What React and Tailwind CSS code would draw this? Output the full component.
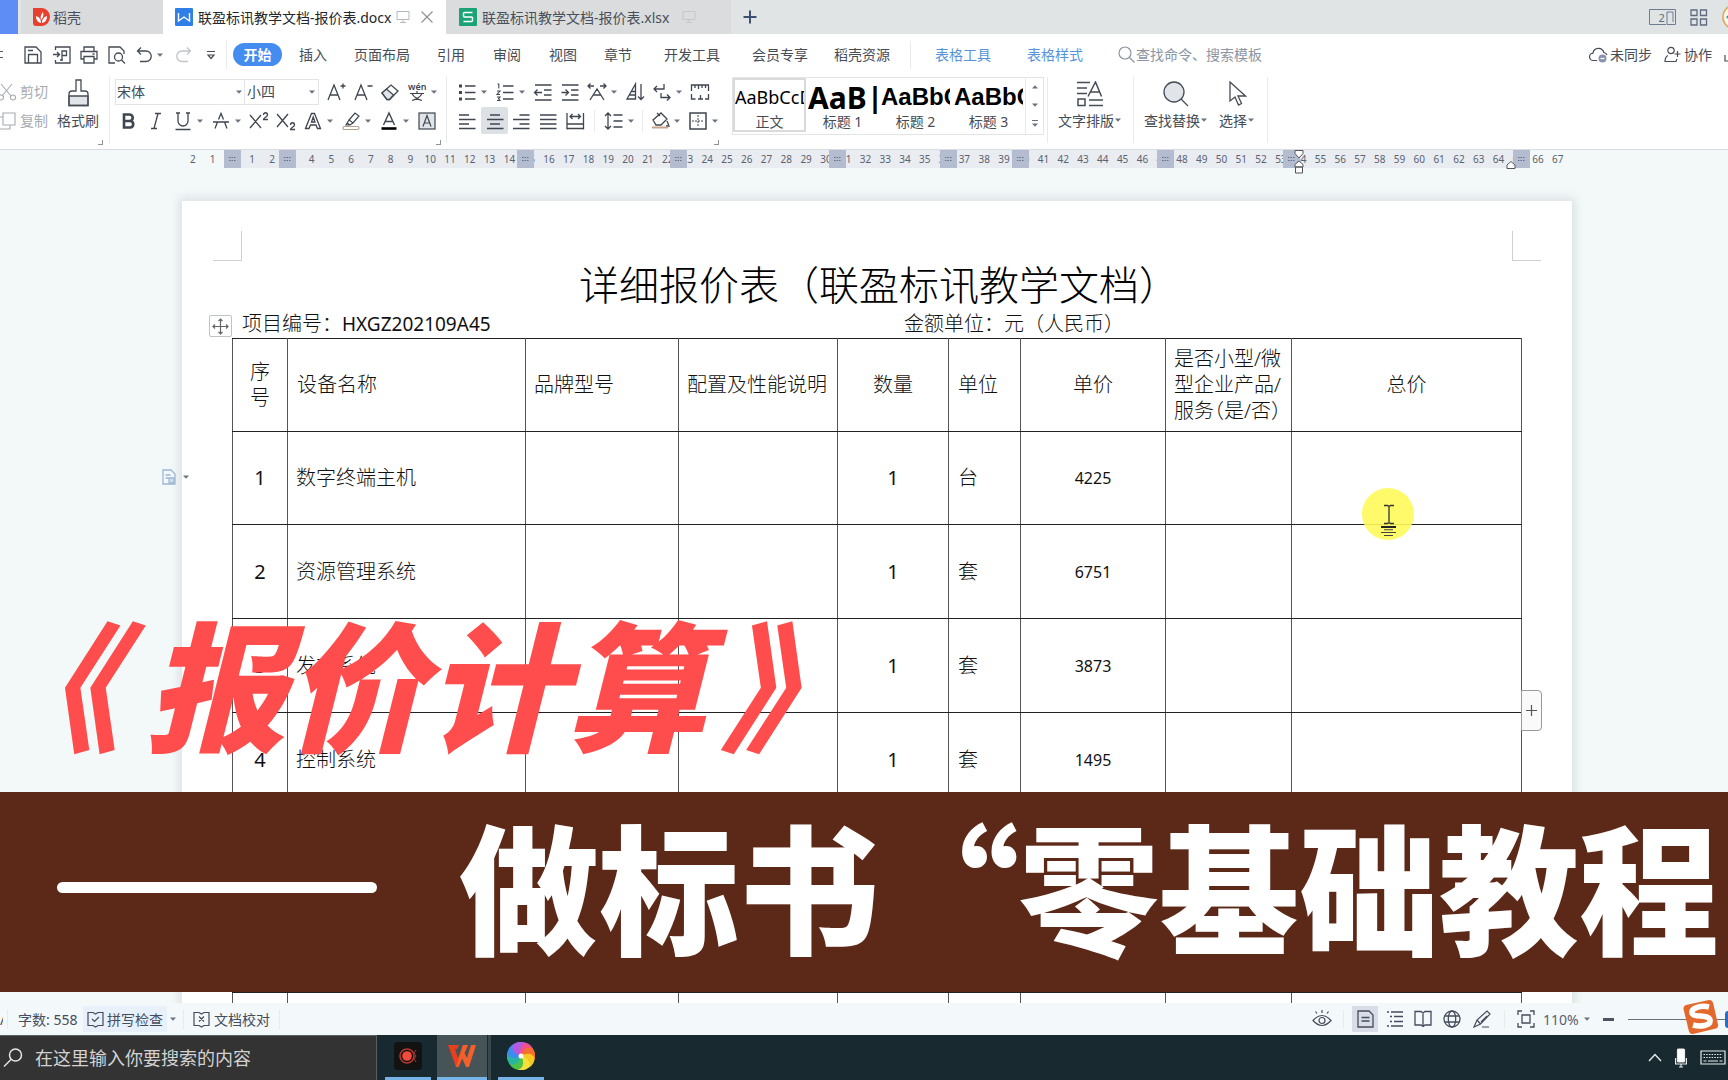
import React from "react";

const UI = "font-['Noto_Sans','Noto_Sans_CJK_SC',sans-serif]";

function Svg({ w = 20, h = 20, children, className = "", sw = 1.4 }) {
  return (
    <svg
      width={w}
      height={h}
      viewBox={`0 0 ${w} ${h}`}
      fill="none"
      stroke="currentColor"
      strokeWidth={sw}
      className={`shrink-0 ${className}`}
      aria-hidden="true"
    >
      {children}
    </svg>
  );
}

function Caret({ className = "" }) {
  return (
    <svg width="8" height="8" viewBox="0 0 8 8" className={`shrink-0 ${className}`} aria-hidden="true">
      <path d="M1 2.5h6L4 5.8z" fill="#6b7280" />
    </svg>
  );
}

function Tool({ label, caret, active, children }) {
  return (
    <button
      type="button"
      aria-label={label}
      className={`flex h-[27px] shrink-0 items-center justify-between text-[#3f4650] ${caret ? "w-[31px]" : "w-5"}`}
    >
      {active ? (
        <span className="-mx-[3px] flex h-[27px] w-[27px] shrink-0 items-center justify-center rounded-[2px] bg-[#dce1e5]">
          {children}
        </span>
      ) : (
        children
      )}
      {caret && <Caret />}
    </button>
  );
}

const VLine = ({ className = "" }) => <span className={`w-px shrink-0 bg-[#e8eaec] ${className}`} />;

/* ---------- title tabs ---------- */

function Monitor({ className }) {
  return (
    <Svg w={14} h={14} sw={1} className={className}>
      <path d="M1 1.500h12v8H1zM7 9.500v3M4 12.500h6" />
    </Svg>
  );
}

function TabBar() {
  return (
    <header className="flex h-[34px] shrink-0 items-stretch bg-[#e1e4e5] text-[14px] text-[#48505c]">
      <div className="w-[18px] shrink-0 bg-[#5e8df6]" />
      <button type="button" className="ml-[3px] flex w-[142px] shrink-0 items-center bg-[#dadbdc] pl-3">
        <svg width="17" height="18" viewBox="0 0 17 18" className="mr-[3px]" aria-hidden="true">
          <path d="M0 0h9a8 9 0 0 1 0 18H3a3 3 0 0 1-3-3z" fill="#e8402f" />
          <path d="M8 15C4 14 3 11 3 8c3 1 5 3 5 7zM8 12c-1-3 0-6 2-8 1 3 0 6-2 8zM9 15c0-4 2-6 5-7 0 3-1 6-5 7z" fill="#fff" />
        </svg>
        稻壳
      </button>
      <div className="flex w-[283px] shrink-0 items-center bg-white pl-3 text-[#22272e]">
        <svg width="18" height="18" viewBox="0 0 18 18" className="mr-[5px] shrink-0" aria-hidden="true">
          <rect width="18" height="18" rx="1" fill="#2f7fe6" />
          <path d="M3.500 5v8l5.500-4 5.500 4V5" fill="none" stroke="#fff" strokeWidth="1.4" />
        </svg>
        <span className="whitespace-nowrap">联盈标讯教学文档-报价表.docx</span>
        <Monitor className="ml-auto text-[#b4b9bf]" />
        <button type="button" aria-label="关闭" className="mr-[12px] ml-[10px] text-[#8b9096]">
          <Svg w={14} h={14} sw={1.2}>
            <path d="M1.500 1.500l11 11M12.500 1.500l-11 11" />
          </Svg>
        </button>
      </div>
      <button type="button" className="flex w-[285px] shrink-0 items-center bg-[#dadcdd] pl-[13px]">
        <svg width="18" height="18" viewBox="0 0 18 18" className="mr-[5px] shrink-0" aria-hidden="true">
          <rect width="18" height="18" rx="1" fill="#1aa377" />
          <path d="M13.500 4.500H5.500a1 1 0 0 0-1 1V8a1 1 0 0 0 1 1h7a1 1 0 0 1 1 1v2.500a1 1 0 0 1-1 1H4.500" fill="none" stroke="#fff" strokeWidth="1.5" />
        </svg>
        <span className="whitespace-nowrap">联盈标讯教学文档-报价表.xlsx</span>
        <Monitor className="mr-[35px] ml-auto text-[#c3c8cc]" />
      </button>
      <button type="button" aria-label="新建标签" className="ml-3 text-[#3c5070]">
        <Svg w={14} h={14} sw={2}>
          <path d="M7 .5v13M.5 7h13" />
        </Svg>
      </button>
      <div className="ml-auto flex items-center text-[#5d6a80]">
        <svg width="27" height="17" viewBox="0 0 27 17" aria-hidden="true" className="mr-[14px]">
          <path d="M17 15.500H.5V.5h26v15H18V3h6v10" fill="none" stroke="#6f7b90" />
          <text x="9.500" y="12.500" fontSize="11" fill="#5d6a80">2</text>
        </svg>
        <Svg w={18} h={17} sw={1.3} className="mr-[14px]">
          <path d="M1 1h6v5.500H1zM10.500 1h6v5.500h-6zM1 10h6v6H1zM10.500 10h6v6h-6z" />
        </Svg>
        <svg width="6" height="26" viewBox="0 0 6 26" aria-hidden="true">
          <circle cx="13" cy="13" r="12" fill="#fdf6e6" stroke="#dfa35e" strokeWidth="1.6" />
          <circle cx="6" cy="13" r="1.600" fill="#3a9d8a" />
        </svg>
      </div>
    </header>
  );
}

/* ---------- menu row ---------- */

const menu = [
  ["插入", "ml-[17px]"],
  ["页面布局", "ml-[27px]"],
  ["引用", "ml-[27px]"],
  ["审阅", "ml-[28px]"],
  ["视图", "ml-[28px]"],
  ["章节", "ml-[27px]"],
  ["开发工具", "ml-[32px]"],
  ["会员专享", "ml-[32px]"],
  ["稻壳资源", "ml-[26px]"],
];

function MenuRow() {
  return (
    <nav className="flex h-[41px] shrink-0 items-center bg-white text-[14px] whitespace-nowrap text-[#454c56]">
      <div className="flex w-[226px] shrink-0 items-center text-[#444b55]">
        <span className="h-[7px] w-[3px] border-y border-[#555c66]" />
        <button type="button" aria-label="保存" className="ml-[21px]">
          <Svg w={18} h={18} sw={1.3}>
            <path d="M1 1h11l5 5v11H1zM4.500 17V8.500h9V17M4 4.500h5" />
          </Svg>
        </button>
        <button type="button" aria-label="输出为PDF" className="ml-[11px]">
          <Svg w={18} h={18} sw={1.3}>
            <path d="M2.500 4V1h14.500v16H2.500v-3M0 8.500h6M4 6l2.500 2.500L4 11M9 14V5h4.500v4.500H9M7 14h3" />
          </Svg>
        </button>
        <button type="button" aria-label="打印" className="ml-[9px]">
          <Svg w={18} h={18} sw={1.3}>
            <path d="M4 5V1h10v4M4 13H1V5.500h16V13h-3M4 10.500h10V17H4zM12.500 8h2" />
          </Svg>
        </button>
        <button type="button" aria-label="打印预览" className="ml-[10px]">
          <Svg w={18} h={18} sw={1.3}>
            <path d="M7 17H1V1h11l4 4v3M13.500 14l3.500 3.500" />
            <circle cx="10.500" cy="11" r="4" />
          </Svg>
        </button>
        <button type="button" aria-label="撤销" className="ml-[10px] flex items-center">
          <Svg w={17} h={18} sw={1.3}>
            <path d="M5 1.500L1.500 5 5 8.500M1.500 5H10a5 5 0 0 1 0 10.500H4" />
          </Svg>
          <Caret className="ml-[3px]" />
        </button>
        <button type="button" aria-label="恢复" className="ml-[11px] text-[#c0c4c9]">
          <Svg w={17} h={18} sw={1.3}>
            <path d="M12 1.500L15.500 5 12 8.500M15.500 5H7a5 5 0 0 0 0 10.500h6" />
          </Svg>
        </button>
        <button type="button" aria-label="自定义快速访问" className="ml-[14px]">
          <Svg w={10} h={10} sw={1.2}>
            <path d="M1 1.500h8M2 5h6L5 8.500z" />
          </Svg>
        </button>
      </div>
      <VLine className="h-7" />
      <button
        type="button"
        className="ml-[6px] h-[23px] w-[49px] shrink-0 rounded-full bg-[#458cf0] text-[14px] leading-[23px] font-bold text-white"
      >
        开始
      </button>
      {menu.map(([label, ml]) => (
        <button type="button" key={label} className={`shrink-0 ${ml}`}>
          {label}
        </button>
      ))}
      <VLine className="ml-[20px] h-7" />
      <button type="button" className="ml-[24px] text-[#5594dc]">表格工具</button>
      <button type="button" className="ml-[36px] text-[#5594dc]">表格样式</button>
      <label className="ml-[35px] flex w-[150px] items-center text-[#8b95a3]">
        <Svg w={17} h={17} sw={1.2}>
          <circle cx="7" cy="7" r="6" />
          <path d="M11.500 11.500l5 5" />
        </Svg>
        <input
          aria-label="搜索"
          placeholder="查找命令、搜索模板"
          className="ml-[1px] w-full bg-transparent outline-none placeholder:text-[#8b95a3]"
        />
      </label>
      <div className="ml-auto flex items-center">
        <button type="button" className="flex items-center">
          <Svg w={19} h={17} sw={1.2} className="mr-[2px]">
            <path d="M8 14.500H4.500a3.700 3.700 0 0 1-.5-7.400A5.500 5.500 0 0 1 14.800 6.500 4 4 0 0 1 18 9" />
            <circle cx="13.500" cy="12.500" r="4" fill="#8893ad" stroke="none" />
            <path d="M11.500 12.500h4" stroke="#fff" />
          </Svg>
          未同步
        </button>
        <button type="button" className="ml-[12px] flex items-center">
          <Svg w={17} h={17} sw={1.2} className="mr-[3px]">
            <circle cx="7" cy="4.500" r="3.200" />
            <path d="M4 9.500c-2 1-3 3-3 6h11l1-2.500M13.500 5v6M10.500 8h6" />
          </Svg>
          协作
        </button>
        <Svg w={4} h={14} sw={1.2} className="ml-[12px]">
          <path d="M1 7v6h4" />
        </Svg>
      </div>
    </nav>
  );
}

/* ---------- ribbon ---------- */

const Corner = ({ className = "" }) => (
  <span className={`absolute bottom-[4px] h-[5px] w-[5px] border-r border-b border-[#8d939b] ${className}`} />
);

function StyleCell({ sample, name, selected, sampleClass }) {
  return (
    <button
      type="button"
      className={`flex h-[54px] w-[73px] shrink-0 flex-col items-center overflow-hidden border-2 ${selected ? "border-[#d9dadc]" : "border-transparent"}`}
    >
      <span className={`flex h-[34px] w-full items-center overflow-hidden whitespace-nowrap text-black ${sampleClass}`}>{sample}</span>
      <span className="text-[14px] leading-[15px] whitespace-nowrap text-[#454c56]">{name}</span>
    </button>
  );
}

function Ribbon() {
  return (
    <section className="flex h-[75px] shrink-0 items-start border-b border-[#d9dde3] bg-white pt-[2px] text-[14px] whitespace-nowrap text-[#454c56]">
      <div className="relative flex h-full w-[109px] shrink-0">
        <div className="flex w-[48px] flex-col text-[#a6abb1]">
          <button type="button" className="flex h-[29px] items-center">
            <Svg w={17} h={18} sw={1.1} className="mr-[3px]">
              <path d="M1 1l10 12M12 1L2 13" />
              <circle cx="1" cy="14.500" r="2.500" />
              <circle cx="13" cy="14.500" r="2.500" />
            </Svg>
            剪切
          </button>
          <button type="button" className="flex h-[29px] items-center">
            <Svg w={17} h={18} sw={1.1} className="mr-[3px]">
              <path d="M3 1h12v12H3zM0 5h3M0 17h10v-4" />
            </Svg>
            复制
          </button>
        </div>
        <button type="button" className="ml-[9px] flex flex-col items-center self-start pt-[2px]">
          <Svg w={21} h={28} sw={1.3}>
            <path d="M1 17h19v9.500H1z" fill="#e1e4e8" />
            <path d="M1 26.500V15q0-3 3-3h4V1h5v11h4q3 0 3 3v11.500z" />
          </Svg>
          <span className="mt-[4px] leading-[20px]">格式刷</span>
        </button>
        <Corner className="right-[6px]" />
      </div>
      <VLine className="h-[66px]" />
      <div className="relative h-full w-[336px] shrink-0 pl-[5px]">
        <div className="flex h-[29px] items-center gap-[7px]">
          <div className="flex h-[26px] w-[204px] shrink-0 border border-[#e2e4e6]">
            <button type="button" aria-label="字体" className="flex w-[129px] items-center justify-between border-r border-[#e2e4e6] px-[1px]">
              宋体
              <Caret />
            </button>
            <button type="button" aria-label="字号" className="flex flex-1 items-center justify-between px-[2px]">
              小四
              <Caret />
            </button>
          </div>
          <Tool label="增大字号">
            <Svg sw={1.3}>
              <path d="M2 18L8 3l6 15M4 13h8M14.500 4h5M17 1.500v5" />
            </Svg>
          </Tool>
          <Tool label="减小字号">
            <Svg sw={1.3}>
              <path d="M2 18L8 3l6 15M4 13h8M14.500 4h5" />
            </Svg>
          </Tool>
          <Tool label="清除格式">
            <Svg sw={1.3}>
              <path d="M2 11l9-8 7 6-8.500 8.500H7z" />
              <path d="M2 11l4.500-4 7 6L9.500 17.500H7z" fill="#e1e4e8" />
            </Svg>
          </Tool>
          <Tool label="拼音指南" caret>
            <Svg sw={1.2}>
              <text x="1" y="8" fontSize="9" fill="currentColor" stroke="none" fontWeight="600">wén</text>
              <path d="M3 11.500h14M10 9v2.500M5 11.500c2 4 6 6 10 7M15 11.500c-2 4-6 6-10 7" />
            </Svg>
          </Tool>
        </div>
        <div className="flex h-[29px] items-center gap-[7px] pl-[4px]">
          <Tool label="加粗">
            <Svg sw={2.6}>
              <path d="M5 3.500h5.500a3.200 3.200 0 0 1 0 6.500H5zM5 10h6.500a3.300 3.300 0 0 1 0 6.500H5z" />
            </Svg>
          </Tool>
          <Tool label="倾斜">
            <Svg sw={1.3}>
              <path d="M9 2.500h6M5 17.500h6M12 2.500L8 17.500" />
            </Svg>
          </Tool>
          <Tool label="下划线" caret>
            <Svg sw={1.3}>
              <path d="M5 2v8a5 5 0 0 0 10 0V2M3 2h4M13 2h4M2.500 18.500h15" />
            </Svg>
          </Tool>
          <Tool label="删除线" caret>
            <Svg sw={1.3}>
              <path d="M4 17.500L6.500 11M13.500 11L16 17.500M7.500 8.500L10 2.500l2.500 6M2 11h16" />
            </Svg>
          </Tool>
          <Tool label="上标">
            <Svg sw={1.3}>
              <path d="M1 4l11 13M12 4L1 17M14.500 4c0-3 4-3 4 0 0 2-4 2.500-4 4.500h4.500" />
            </Svg>
          </Tool>
          <Tool label="下标">
            <Svg sw={1.3}>
              <path d="M1 3l11 13M12 3L1 16M14.500 14c0-3 4-3 4 0 0 2-4 2.500-4 4.500h4.500" />
            </Svg>
          </Tool>
          <Tool label="文字效果" caret>
            <Svg sw={1.3}>
              <path d="M2.500 17.500L8.500 2.500h3l6 15h-3L13 14H7.500L6 17.500zM8.500 11h3.500L10.200 6z" />
            </Svg>
          </Tool>
          <Tool label="突出显示" caret>
            <Svg sw={1.2}>
              <path d="M8 9l6-7 4 3-6 7zM8 9l-3 5h4l3-2M6 12l3 2" />
              <rect x="2" y="15.500" width="16" height="3" rx="1.500" stroke="#b4a08c" />
            </Svg>
          </Tool>
          <Tool label="字体颜色" caret>
            <Svg sw={1.4}>
              <path d="M4.500 14L10 2l5.500 12M6.500 10.500h7" />
              <path d="M2.500 17.500h15" stroke="#000" strokeWidth="2.600" />
            </Svg>
          </Tool>
          <Tool label="字符底纹">
            <Svg sw={1.2}>
              <rect x="2" y="2" width="16" height="16" fill="#e1e4e8" />
              <path d="M6 15.500l4-11 4 11M7.500 12h5" />
            </Svg>
          </Tool>
        </div>
        <Corner className="right-[5px]" />
      </div>
      <div className="relative h-full w-[274px] shrink-0 pl-[11px]">
        <VLine className="absolute top-0 left-0 h-[66px]" />
        <div className="flex h-[29px] items-center gap-[7px]">
          <Tool label="项目符号" caret>
            <Svg sw={1.4}>
              <path d="M8 4h10.500M8 10.500h10.500M8 17h10.500" />
              <path d="M2 4h3M2 10.500h3M2 17h3" strokeWidth="3" />
            </Svg>
          </Tool>
          <Tool label="编号" caret>
            <Svg sw={1.4}>
              <path d="M8 4h10.500M8 10.500h10.500M8 17h10.500" />
              <path d="M2.500 2h1.300v4.500M2 9h3l-3 3.500h3M2 15h3l-1.500 1.800L5 18.500H2" strokeWidth="1.1" />
            </Svg>
          </Tool>
          <Tool label="减少缩进">
            <Svg sw={1.3}>
              <path d="M2 3h16.500M11 8h7.500M11 13h7.500M2 18h16.500M9 10.500H1.500M4.500 7.500l-3 3 3 3" />
            </Svg>
          </Tool>
          <Tool label="增加缩进">
            <Svg sw={1.3}>
              <path d="M2 3h16.500M11 8h7.500M11 13h7.500M2 18h16.500M1.500 10.500H8.500M5.500 7.500l3 3-3 3" />
            </Svg>
          </Tool>
          <Tool label="中文版式" caret>
            <Svg sw={1.3}>
              <path d="M1 4h6M3.500 1.500L1 4l2.500 2.500M19 4h-6M16.500 1.500L19 4l-2.500 2.500M3 18l7-11 7 11M6 13h8" />
            </Svg>
          </Tool>
          <Tool label="排序">
            <Svg sw={1.3}>
              <path d="M2 17L10.500 2v15zM6.500 9.500h4M4.500 13h6M16 2v15.500M13 14.500l3 3 3-3" />
            </Svg>
          </Tool>
          <Tool label="换行" caret>
            <Svg sw={1.3}>
              <path d="M12 2v5H2M5 4L2 7l3 3M9 11v4.500h9M15 12.500l3 3-3 3" />
            </Svg>
          </Tool>
          <Tool label="制表位">
            <Svg sw={1.3}>
              <path d="M1.500 9V3h17v6M5 3v3M8.500 3v4M12 3v3M15.500 3v3M1.500 12v5h4M8 17h5M10.500 13v4M15 17h3.500v-5" />
            </Svg>
          </Tool>
        </div>
        <div className="flex h-[29px] items-center gap-[7px]">
          <Tool label="左对齐">
            <Svg><path d="M2 4h10M2 8.500h16.500M2 13h10M2 17.500h16.500" /></Svg>
          </Tool>
          <Tool label="居中对齐" active>
            <Svg><path d="M5 4h10M2 8.500h16.500M5 13h10M2 17.500h16.500" /></Svg>
          </Tool>
          <Tool label="右对齐">
            <Svg><path d="M8.500 4h10M2 8.500h16.500M8.500 13h10M2 17.500h16.500" /></Svg>
          </Tool>
          <Tool label="两端对齐">
            <Svg><path d="M2 4h16.500M2 8.500h16.500M2 13h16.500M2 17.500h16.500" /></Svg>
          </Tool>
          <Tool label="分散对齐">
            <Svg sw={1.3}>
              <path d="M2 2v16.500M18.500 2v16.500M2 13h16.500M2 17.500h16.500M5 5.500h10.500M7.500 3L5 5.500 7.500 8M13 3l2.500 2.500L13 8" />
            </Svg>
          </Tool>
          <VLine className="mx-[2px] h-[22px]" />
          <Tool label="行距" caret>
            <Svg sw={1.3}>
              <path d="M4 2v16M1 5l3-3 3 3M1 15l3 3 3-3M9.500 4h9M9.500 10h9M9.500 16h9" />
            </Svg>
          </Tool>
          <VLine className="h-[22px]" />
          <Tool label="底纹颜色" caret>
            <Svg sw={1.3}>
              <path d="M3 9l8-7 6 6-6 6H6zM7 2l3 3M17 10l2 5h-3" />
              <path d="M2 16.500h16" stroke="#c9a28a" strokeWidth="2" />
            </Svg>
          </Tool>
          <Tool label="边框" caret>
            <Svg sw={1.5}>
              <path d="M2 2h16v16H2z" />
              <path d="M10 4v12M4 10h12" strokeWidth="1" strokeDasharray="2 1" />
            </Svg>
          </Tool>
        </div>
        <Corner className="right-[1px]" />
      </div>
      <div className="ml-[12px] flex h-[58px] w-[312px] shrink-0 items-start border border-[#e2e4e6]">
        <StyleCell selected sample="AaBbCcD" name="正文" sampleClass="text-[18px]" />
        <StyleCell sample="AaB|" name="标题 1" sampleClass="text-[30px] font-bold" />
        <StyleCell
          sample="AaBbC"
          name="标题 2"
          sampleClass="font-['Liberation_Sans',sans-serif] text-[24px] font-bold"
        />
        <StyleCell
          sample="AaBbC"
          name="标题 3"
          sampleClass="font-['Liberation_Sans',sans-serif] text-[24px] font-bold"
        />
        <div className="flex h-full flex-1 flex-col items-center justify-around border-l border-[#e8eaec]">
          <button type="button" aria-label="上一行"><Caret className="rotate-180" /></button>
          <button type="button" aria-label="下一行"><Caret /></button>
          <button type="button" aria-label="更多样式" className="flex flex-col items-center">
            <span className="h-px w-[6px] bg-[#6b7280]" />
            <Caret />
          </button>
        </div>
      </div>
      <VLine className="ml-[3px] h-[66px]" />
      <button type="button" className="ml-[10px] flex flex-col items-center pt-[4px]">
        <Svg w={26} h={26} sw={1.5}>
          <path d="M0 1.500h13M0 7h10M0 12.500h10M11 15.500L18.500 1l6 14.500M13.500 11h9M1 18h7v6.500H1zM12 19h14M12 24.500h14" />
        </Svg>
        <span className="mt-[4px] flex items-start leading-[20px]">文字排版<Caret className="mt-[5px]" /></span>
      </button>
      <VLine className="ml-[11px] h-[66px]" />
      <button type="button" className="ml-[10px] flex flex-col items-center pt-[4px]">
        <Svg w={26} h={26} sw={1.3}>
          <circle cx="11" cy="11" r="10" fill="#e1e4e8" />
          <path d="M18 18l7 7" />
        </Svg>
        <span className="mt-[4px] flex items-start leading-[20px]">查找替换<Caret className="mt-[5px]" /></span>
      </button>
      <button type="button" className="ml-[11px] flex flex-col items-center pt-[4px]">
        <Svg w={20} h={26} sw={1.3}>
          <path d="M3 1v19l5-4 3.500 8 3-1.500-3.500-7.500h7.500z" />
        </Svg>
        <span className="mt-[4px] flex items-start leading-[20px]">选择<Caret className="mt-[5px]" /></span>
      </button>
      <VLine className="ml-[12px] h-[66px]" />
    </section>
  );
}

/* ---------- ruler and page ---------- */

const columns = [55, 238, 153, 159, 111, 72, 145, 126, 230];
const stops = columns.reduce((list, w) => [...list, list[list.length - 1] + w], [51]);
const rulerNumbers = Array.from({ length: 70 }, (_, i) => i - 2);

function Ruler() {
  return (
    <div className="pl-[26px]">
      <div className="relative mx-auto h-[18px] w-full max-w-[1390px]">
        <div className="absolute inset-y-0 right-[46px] left-[44px] bg-[#e9ecf1]" />
        <div className="absolute inset-y-0 right-[4px] left-[1px] flex text-[10px] leading-[18px] text-[#5b6270]">
          {rulerNumbers.map((n) => (
            <span key={n} className="w-0 flex-1 text-center">
              {n === 0 ? "" : Math.abs(n)}
            </span>
          ))}
        </div>
        {stops.map((x) => (
          <span
            key={x}
            style={{ left: x - 9 }}
            className="absolute inset-y-0 flex w-[17px] items-center justify-center bg-[#b4bdd0] text-[#64708a]"
          >
            <Svg w={7} h={6} sw={1}>
              <path d="M0 1.500h7M0 4.500h7" strokeDasharray="1.500 1" />
            </Svg>
          </span>
        ))}
        <svg width="10" height="24" viewBox="0 0 10 24" className="absolute top-0 left-[1112px]" fill="#fff" stroke="#555" aria-hidden="true">
          <path d="M1 .5h8v3L5 8 1 3.500zM5 11l4 3.500V17H1v-2.500zM1.500 17h7v6h-7z" />
        </svg>
        <svg width="10" height="8" viewBox="0 0 10 8" className="absolute top-[11px] left-[1324px]" fill="#fff" stroke="#555" aria-hidden="true">
          <path d="M5 .5l4 3.500v3.500H1V4z" />
        </svg>
      </div>
    </div>
  );
}

const rows = [
  ["1", "数字终端主机", "1", "台", "4225", "h-[93px]"],
  ["2", "资源管理系统", "1", "套", "6751", "h-[94px]"],
  ["3", "发布系统", "1", "套", "3873", "h-[94px]"],
  ["4", "控制系统", "1", "套", "1495", "h-[94px]"],
  ["", "", "", "", "", "h-[93px]"],
  ["", "", "", "", "", "h-[93px]"],
  ["", "", "", "", "", "h-[93px]"],
];

const cell = "border-x border-x-[#555] border-y border-y-[#222] p-0";

function QuoteTable() {
  return (
    <table className="w-[1290px] table-fixed border-collapse text-[20px] leading-[26px] text-[#111]">
      <colgroup>
        {columns.map((w, i) => (
          <col key={i} style={{ width: w }} />
        ))}
      </colgroup>
      <thead>
        <tr className="h-[93px] [&>th]:font-light">
          <th className={`${cell} px-[16px]`}>序号</th>
          <th className={`${cell} pl-[9px] text-left`}>设备名称</th>
          <th className={`${cell} pl-[8px] text-left`}>品牌型号</th>
          <th className={`${cell} pl-[8px] text-left whitespace-nowrap`}>配置及性能说明</th>
          <th className={cell}>数量</th>
          <th className={`${cell} pl-[9px] text-left`}>单位</th>
          <th className={cell}>单价</th>
          <th className={`${cell} pl-[8px] text-left whitespace-nowrap`}>
            是否小型/微<br />型企业产品/<br />服务<span className="[font-feature-settings:'halt']">（</span>是/否）
          </th>
          <th className={cell}>总价</th>
        </tr>
      </thead>
      <tbody>
        {rows.map(([no, name, qty, unit, price, h], i) => (
          <tr key={i} className={h}>
            <td className={`${cell} text-center`}>{no}</td>
            <td className={`${cell} pl-[8px] font-light`}>{name}</td>
            <td className={cell} />
            <td className={cell} />
            <td className={`${cell} text-center`}>{qty}</td>
            <td className={`${cell} pl-[9px] font-light`}>{unit}</td>
            <td className={`${cell} text-center text-[16px]`}>{price}</td>
            <td className={cell} />
            <td className={cell} />
          </tr>
        ))}
      </tbody>
    </table>
  );
}

function Document() {
  return (
    <main className="relative min-h-0 flex-1 overflow-hidden bg-[#f3f9f9]">
      <Ruler />
      <div className="pl-[26px]">
        <article className="relative mx-auto mt-[33px] w-full max-w-[1390px] bg-white px-[50px] pt-[60px] shadow-[0_0_9px_3px_rgba(120,130,140,0.2)]">
          <span className="absolute top-[30px] left-[31px] h-[30px] w-[29px] border-r border-b border-[#cfcfcf]" />
          <span className="absolute top-[30px] right-[31px] h-[30px] w-[29px] border-b border-l border-[#cfcfcf]" />
          <div className="absolute top-[268px] left-[-20px] flex items-center gap-[6px] text-[#9db7d6]">
            <Svg w={14} h={16} sw={1.3}>
              <path d="M1 1h8l4 4v10H1zM3.500 6h5M3.500 9h3" />
              <path d="M7 9h5v5H7z" fill="#cfdff0" />
            </Svg>
            <Caret />
          </div>
          <h1 className="pl-[4px] text-center text-[40px] leading-[48px] font-light whitespace-nowrap text-black">
            详细报价表（联盈标讯教学文档）
          </h1>
          <div className="flex h-[29px] items-center text-[20px] whitespace-nowrap text-[#111]">
            <p className="w-[672px] pl-[10px]">
              <span className="font-light">项目编号：</span>
              <span className="text-[19px]">HXGZ202109A45</span>
            </p>
            <p className="font-light">金额单位：元（人民币）</p>
          </div>
          <button
            type="button"
            aria-label="移动表格"
            className="absolute top-[114px] left-[27px] flex h-[22px] w-[23px] items-center justify-center rounded-[2px] border border-[#bfc3c7] bg-white text-[#666]"
          >
            <Svg w={17} h={17} sw={1.2}>
              <path d="M8.500 1v15M1 8.500h15M6.500 3l2-2 2 2M6.500 14l2 2 2-2M3 6.500l-2 2 2 2M14 6.500l2 2-2 2" />
            </Svg>
          </button>
          <QuoteTable />
          <button
            type="button"
            aria-label="添加列"
            className="absolute top-[489px] right-[30px] flex h-[41px] w-[21px] items-center justify-center rounded-r-[4px] border border-[#9a9a9a] bg-[#fafafa] text-[#555]"
          >
            <Svg w={11} h={11} sw={1.2}>
              <path d="M5.500 0v11M0 5.500h11" />
            </Svg>
          </button>
          <svg width="52" height="54" viewBox="0 0 52 54" className="absolute top-[287px] left-[1180px]" aria-hidden="true">
            <circle cx="26" cy="26" r="26" fill="#fffa5a" fillOpacity="0.9" />
            <path d="M22 17.500h3.500l1.500 1 1.500-1H32M27 18.500v16M22 35.500h3.500l1.500-1 1.500 1H32" fill="none" stroke="#333" strokeWidth="1.300" />
            <path d="M19 39h15" stroke="#222" strokeWidth="2" />
            <path d="M22 41.800h9M19 44.500h15M22 47.500h9" stroke="#444" strokeWidth="1.100" />
          </svg>
        </article>
      </div>

      <p className="absolute bottom-[225px] left-[6px] font-['Noto_Sans_CJK_SC',sans-serif] text-[140px] leading-[196px] font-black whitespace-nowrap text-[#ff4d4d] italic">
        <span className="-ml-[26px] pr-[26px]">《</span>报价计算<span className="pl-[14px]">》</span>
      </p>
      <div className="absolute inset-x-0 bottom-[11px] flex h-[200px] items-center overflow-hidden bg-[#5c2817] pb-[10px]">
        <span className="ml-[57px] h-[11px] w-[320px] shrink-0 rounded-full bg-white" />
        <p className="ml-[82px] pb-[8px] font-['Noto_Sans_CJK_SC',sans-serif] text-[140px] leading-[190px] font-black whitespace-nowrap text-white">
          做标书“零基础教程
        </p>
      </div>
    </main>
  );
}

/* ---------- status bar ---------- */

function StatusBar() {
  return (
    <footer className="relative flex h-[32px] shrink-0 items-center bg-[#f3f8fa] text-[14px] whitespace-nowrap text-[#454c5c]">
      <span className="w-[3px] overflow-hidden">/</span>
      <VLine className="ml-[4px] h-[20px] bg-[#d9dee2]" />
      <span className="ml-[10px] w-[65px]">字数: 558</span>
      <button type="button" className="flex h-[26px] items-center bg-[#e8f1fa] px-[4px]">
        <Svg w={17} h={17} sw={1.2} className="mr-[3px]">
          <path d="M1 1.500h5l2.500 1.500L11 1.500h5v13h-5L8.500 16 6 14.500H1zM5 8l2.500 2.500L12 6" />
        </Svg>
        拼写检查
      </button>
      <Caret className="ml-[2px]" />
      <VLine className="ml-[6px] h-[20px] bg-[#d9dee2]" />
      <button type="button" className="ml-[9px] flex items-center">
        <Svg w={17} h={17} sw={1.2} className="mr-[4px]">
          <path d="M1 1.500h5l2.500 1.500L11 1.500h5v13h-5L8.500 16 6 14.500H1zM6 5.500l5 5M11 5.500l-5 5" />
        </Svg>
        文档校对
      </button>
      <VLine className="ml-[9px] h-[20px] bg-[#d9dee2]" />
      <div className="ml-auto flex items-center">
        <button type="button" aria-label="护眼模式">
          <Svg w={20} h={20} sw={1.2}>
            <path d="M1 11.500q9-10 18 0-9 10-18 0zM10 1v3M3.500 2.500l1.500 2M16.500 2.500l-1.500 2" />
            <circle cx="10" cy="11.500" r="3" />
          </Svg>
        </button>
        <VLine className="ml-[11px] h-[18px] bg-[#d9dee2]" />
        <button type="button" aria-label="页面视图" className="ml-[8px] flex h-[26px] w-[26px] items-center justify-center bg-[#d8dde8]">
          <Svg w={17} h={18} sw={1.3}>
            <path d="M1 1h11l4 4v12H1zM4.500 7.500h8M4.500 11h8" />
          </Svg>
        </button>
        <button type="button" aria-label="大纲视图" className="ml-[8px]">
          <Svg w={18} h={18} sw={1.3}>
            <path d="M1 2h2M5 2h12M4 6.500h2M8 6.500h9M4 11.500h2M8 11.500h9M1 16h2M5 16h12" />
          </Svg>
        </button>
        <button type="button" aria-label="阅读版式" className="ml-[10px]">
          <Svg w={18} h={18} sw={1.3}>
            <path d="M1 1.500h6l2 1.500 2-1.500h6v13.500h-6L9 16.500 7 15H1zM9 3v13" />
          </Svg>
        </button>
        <button type="button" aria-label="Web版式" className="ml-[11px]">
          <Svg w={18} h={18} sw={1.3}>
            <circle cx="9" cy="9" r="8" />
            <ellipse cx="9" cy="9" rx="3.700" ry="8" />
            <path d="M1.500 6h15M1.500 12h15" />
          </Svg>
        </button>
        <button type="button" aria-label="写作模式" className="ml-[12px]">
          <Svg w={18} h={18} sw={1.2}>
            <path d="M1 17l3-7L14 1l3 3-9.500 10L1 17zM4 10l3.500 4M8 12l6-6M9 17h7" />
          </Svg>
        </button>
        <VLine className="ml-[13px] h-[18px] bg-[#d9dee2]" />
        <button type="button" aria-label="适合页面" className="ml-[12px]">
          <Svg w={18} h={18} sw={1.3}>
            <path d="M1 5V1h4M13 1h4v4M17 13v4h-4M5 17H1v-4M5 5h8v8H5z" />
          </Svg>
        </button>
        <button type="button" className="ml-[8px] flex items-center text-[#596070]">
          <span className="w-[40px] text-left">110%</span>
          <Caret />
        </button>
        <button type="button" aria-label="缩小" className="ml-[12px] h-[3px] w-[11px] bg-[#4b5260]" />
        <span className="ml-[14px] h-px w-[100px] bg-[#6a7078]" />
      </div>
      <span className="absolute top-[8px] right-0 h-[17px] w-[3px] rounded-l-full bg-[#2c6cc4]" />
      <svg width="37" height="36" viewBox="0 0 37 36" className="absolute right-[9px] bottom-0" aria-hidden="true">
        <path d="M4 6L27 1q3-.5 4 2.500l5 22q.5 3-2 4L11 35q-3 .5-4-2.500L1.500 10Q1 7 4 6z" fill="#e2682b" />
        <path d="M27 8C19 6 9 9 10 14s17 1 18 7-10 7-17 5" fill="none" stroke="#fff" strokeWidth="5.500" />
      </svg>
    </footer>
  );
}

/* ---------- taskbar ---------- */

const petals = ["#f0508c", "#f4702c", "#f7c820", "#f4e13c", "#4cc24a", "#28b4a0", "#3c8cf0", "#b45ae0"];

function Taskbar() {
  return (
    <div className="flex h-[45px] shrink-0 items-stretch bg-[#182a2f]">
      <label className="flex w-[377px] shrink-0 items-center border-t border-r border-[#5a5f60] bg-[#333]">
        <Svg w={20} h={20} sw={1.5} className="ml-[3px] text-[#e6e6e6]">
          <circle cx="12.500" cy="7" r="6" />
          <path d="M8 11.500L1 18.500" />
        </Svg>
        <input
          aria-label="搜索"
          placeholder="在这里输入你要搜索的内容"
          className="ml-[12px] w-full bg-transparent text-[18px] outline-none placeholder:text-[#d2d2d2]"
        />
      </label>
      <button type="button" aria-label="录屏" className="ml-[8px] flex w-[46px] items-center justify-center border-b-[3px] border-[#76b4e8]">
        <svg width="28" height="28" viewBox="0 0 28 28" aria-hidden="true">
          <rect width="28" height="28" rx="4" fill="#121212" />
          <circle cx="13" cy="14" r="7" fill="none" stroke="#b33a2c" strokeWidth="1.500" />
          <circle cx="13" cy="14" r="4.800" fill="#f24a3c" />
          <path d="M22 8l-2 3 2 3-2 3 2 3" fill="none" stroke="#a33" />
        </svg>
      </button>
      <button type="button" aria-label="WPS" className="ml-[6px] flex w-[50px] items-center justify-center border-b-[3px] border-[#76b4e8] bg-[#465357]">
        <svg width="28" height="24" viewBox="0 0 28 24" aria-hidden="true">
          <path d="M0 1h11l-2 4H7l3 9 5-13h5l-9 22H8z" fill="#e8401f" />
          <path d="M15 1h5l-3.500 8 2.500 5 4-13h5l-7 22h-3l-4-9-4 9h-2z" fill="#f2602c" />
        </svg>
      </button>
      <span className="ml-[1px] w-[3px] bg-[#3a484c]" />
      <button type="button" aria-label="浏览器" className="ml-[7px] flex w-[46px] items-center justify-center border-b-[3px] border-[#76b4e8]">
        <svg width="28" height="28" viewBox="0 0 28 28" aria-hidden="true">
          {petals.map((c, i) => (
            <path key={c} d="M14 14C10 8 12 1 17 .5c5 .5 8 3.500 9.500 7.500C22 6 17 8 14 14z" fill={c} transform={`rotate(${i * 45} 14 14)`} />
          ))}
          <circle cx="14" cy="14" r="2.500" fill="#fff" />
        </svg>
      </button>
      <div className="ml-auto flex items-center text-[#e6ebec]">
        <Svg w={14} h={9} sw={1.4}>
          <path d="M1 8l6-6.500L13 8" />
        </Svg>
        <Svg w={12} h={20} sw={1.2} className="ml-[13px]">
          <rect x="2.500" y="1" width="7" height="13" rx="1" fill="#fff" />
          <path d="M.6 10v6h10.800v-6M6 16v3M4 19h4" />
        </Svg>
        <Svg w={26} h={15} sw={1.2} className="mr-[2px] ml-[13px]">
          <path d="M1 1h24v13H1z" />
          <path d="M3.500 4.500h19M3.500 7.500h19" strokeDasharray="1.500 1.200" />
          <path d="M3.500 11h3M8 11h10M19.500 11h3" />
        </Svg>
      </div>
    </div>
  );
}

export default function App() {
  return (
    <div className={`flex h-screen flex-col overflow-hidden ${UI}`}>
      <TabBar />
      <MenuRow />
      <Ribbon />
      <Document />
      <StatusBar />
      <Taskbar />
    </div>
  );
}
